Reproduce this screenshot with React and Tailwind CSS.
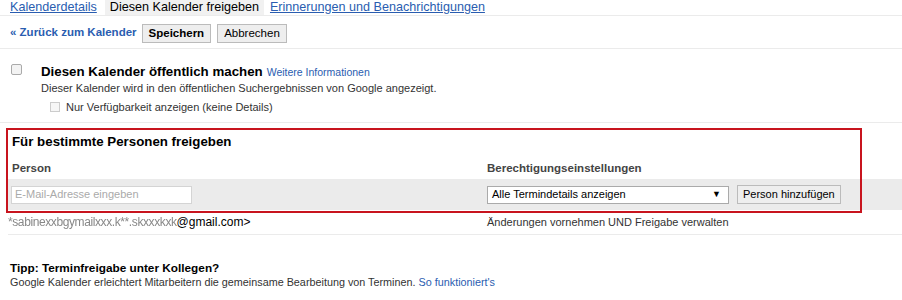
export default function App() {
  return (
    <div className="relative w-[902px] h-[300px] overflow-hidden bg-white text-[#222] font-['Liberation_Sans',Arial,sans-serif]">
      {/* tabs */}
      <div className="flex h-[16px] items-stretch border-b border-[#ebebeb] pl-[10px] text-[12.6px] leading-[15px]">
        <a className="text-[#2a5db0] underline pr-[8px]">Kalenderdetails</a>
        <span className="bg-[#f1f1f1] px-[5px] text-black">Diesen Kalender freigeben</span>
        <a className="text-[#2a5db0] underline pl-[6px]">Erinnerungen und Benachrichtigungen</a>
      </div>

      {/* actions */}
      <div className="flex h-[33px] items-center gap-[4px] border-b border-[#ebebeb] pl-[10px] pt-[2px]">
        <a className="text-[11.5px] font-bold text-[#2a5db0] mr-[1px]">« Zurück zum Kalender</a>
        <button className="h-[19px] border border-[#bbb] bg-[#eee] px-[6px] text-[11.5px] font-bold leading-[17px] text-black">
          Speichern
        </button>
        <button className="ml-[2px] h-[19px] border border-[#bbb] bg-[#eee] px-[6px] text-[11.5px] leading-[17px] text-black">
          Abbrechen
        </button>
      </div>

      {/* public */}
      <div className="flex h-[74px] border-b border-[#ebebeb] pl-[11px] pt-[14px]">
        <div className="mt-[1px] h-[11px] w-[11px] rounded-[2px] border border-[#aaa] bg-[#f3f3f3]" />
        <div className="ml-[19px]">
          <div className="flex items-baseline leading-[17px]">
            <span className="text-[13.3px] font-bold text-black">Diesen Kalender öffentlich machen</span>
            <a className="ml-[4px] text-[10.5px] text-[#2a5db0]">Weitere Informationen</a>
          </div>
          <div className="text-[11px] leading-[14px] text-[#333]">
            Dieser Kalender wird in den öffentlichen Suchergebnissen von Google angezeigt.
          </div>
          <div className="mt-[5px] flex items-center pl-[9px] text-[11px] leading-[14px] text-[#333]">
            <div className="h-[10px] w-[10px] border border-[#ccc] bg-[#f6f6f6]" />
            <span className="ml-[6px]">Nur Verfügbarkeit anzeigen (keine Details)</span>
          </div>
        </div>
      </div>

      {/* specific people */}
      <div className="pl-[8px] pt-[10px]">
        <div className="pl-[4px] text-[13.3px] font-bold leading-[18px] text-black">Für bestimmte Personen freigeben</div>
        <div className="mt-[10px] flex pl-[4px] text-[11.5px] font-bold leading-[14px] text-[#444]">
          <span className="w-[475px]">Person</span>
          <span>Berechtigungseinstellungen</span>
        </div>
        <div className="mt-[4px] flex h-[31px] items-center bg-[#ebebeb] pl-[3px]">
          <div className="flex h-[18px] w-[181px] items-center border border-[#d4d4d4] bg-white pl-[3px] text-[11px] text-[#aaa]">
            E-Mail-Adresse eingeben
          </div>
          <div className="ml-[295px] flex h-[18px] w-[242px] items-center justify-between border border-[#aaa] bg-white pl-[4px] pr-[7px] text-[11px] text-black">
            <span>Alle Termindetails anzeigen</span>
            <span className="text-[9px]">▼</span>
          </div>
          <button className="ml-[8px] h-[19px] border border-[#bbb] bg-[#eee] px-[5px] text-[11px] leading-[17px] text-black">
            Person hinzufügen
          </button>
        </div>
        <div className="flex h-[25px] items-center border-b border-[#ebebeb] text-[11px]">
          <span className="w-[479px] text-[12px] text-black">
            <span className="text-[#888] blur-[0.6px] tracking-[-0.4px]">*sabinexxbgymailxxx.k**.skxxxkxk</span>@gmail.com&gt;
          </span>
          <span className="text-[#333]">Änderungen vornehmen UND Freigabe verwalten</span>
        </div>
      </div>

      {/* tip */}
      <div className="pl-[10px] pt-[25px]">
        <div className="text-[11.8px] font-bold leading-[16px] text-black">Tipp: Terminfreigabe unter Kollegen?</div>
        <div className="text-[10.8px] leading-[13px] text-[#333]">
          Google Kalender erleichtert Mitarbeitern die gemeinsame Bearbeitung von Terminen.{" "}
          <a className="text-[#2a5db0]">So funktioniert's</a>
        </div>
      </div>

      {/* red annotation frame */}
      <div className="pointer-events-none absolute left-[6px] top-[128px] h-[85px] w-[856px] border-2 border-[#c8141e]" />
    </div>
  );
}
